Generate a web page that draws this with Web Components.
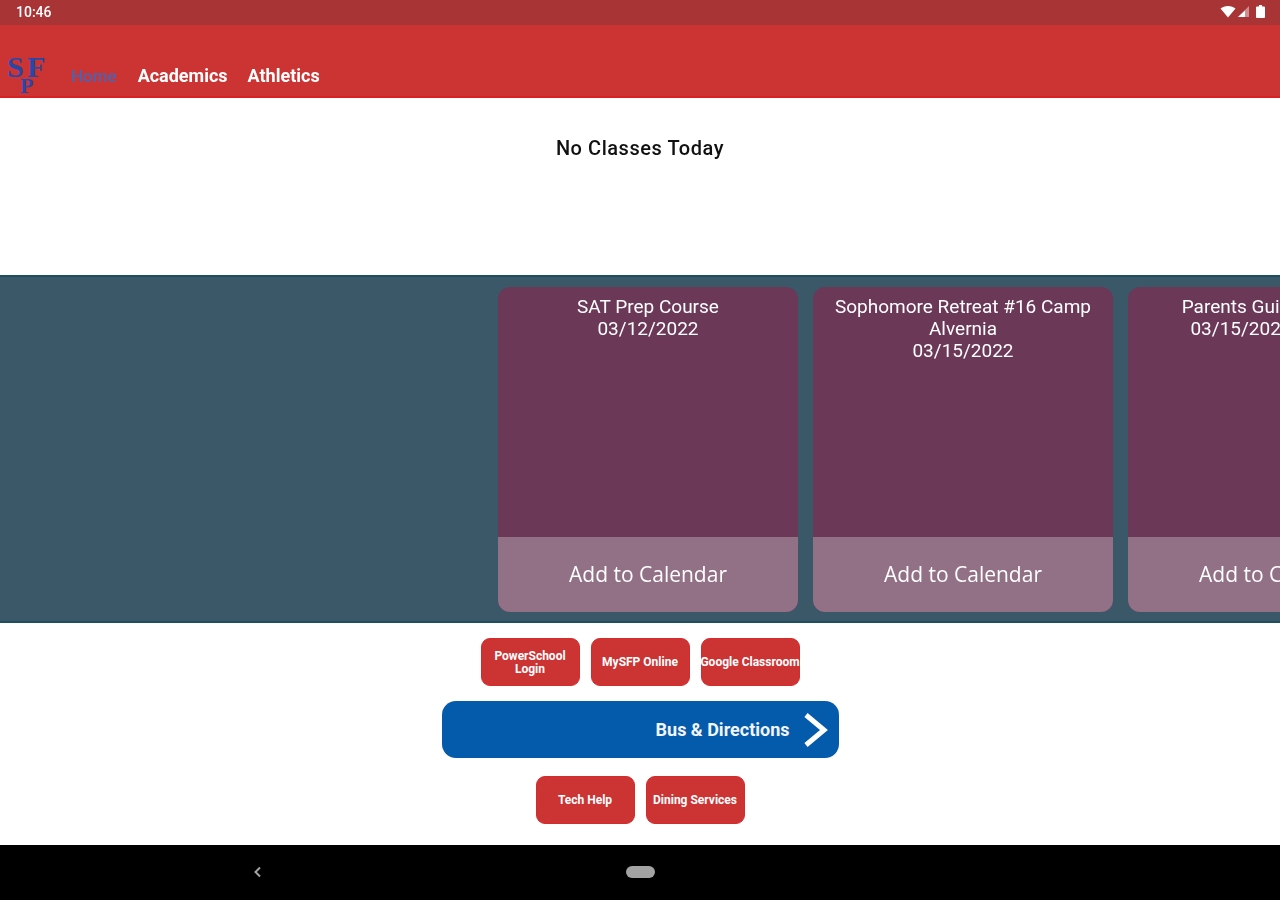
<!DOCTYPE html>
<html>
<head>
<meta charset="utf-8">
<title>SFP</title>
<style>
  html, body { margin: 0; padding: 0; background: #fff; }
  body { font-family: Roboto, "Liberation Sans", sans-serif; width: 1280px; height: 900px; overflow: hidden; }
  app-shell { height: 900px; }
</style>
</head>
<body>
<app-shell>
  <status-bar time="10:46"></status-bar>
  <top-nav>
    <nav-link active>Home</nav-link>
    <nav-link>Academics</nav-link>
    <nav-link>Athletics</nav-link>
  </top-nav>
  <class-notice>No Classes Today</class-notice>
  <event-strip>
    <event-card date="03/12/2022">SAT Prep Course</event-card>
    <event-card date="03/15/2022">Sophomore Retreat #16 Camp Alvernia</event-card>
    <event-card date="03/15/2022" offset>Parents Guide</event-card>
  </event-strip>
  <link-panel>
    <link-row>
      <red-button>PowerSchool Login</red-button>
      <red-button>MySFP Online</red-button>
      <red-button nowrap>Google Classroom</red-button>
    </link-row>
    <bus-button>Bus &amp; Directions</bus-button>
    <link-row>
      <red-button>Tech Help</red-button>
      <red-button>Dining Services</red-button>
    </link-row>
  </link-panel>
  <system-nav></system-nav>
</app-shell>

<script>
class AppShell extends HTMLElement {
  connectedCallback() {
    this.attachShadow({ mode: "open" });
    this.shadowRoot.innerHTML = `
      <style>
        :host { display: flex; flex-direction: column; width: 1280px; filter: blur(0.5px); }
      </style>
      <slot></slot>
    `;
  }
}

class StatusBar extends HTMLElement {
  connectedCallback() {
    this.attachShadow({ mode: "open" });
    this.shadowRoot.innerHTML = `
      <style>
        :host {
          display: flex;
          flex: none;
          height: 25px;
          align-items: center;
          justify-content: space-between;
          padding: 0 15px 0 16px;
          background: #a83436;
          color: #fff;
          font-size: 14px;
          font-weight: 500;
        }
        .time { position: relative; top: -1px; }
        .icons { display: flex; align-items: center; gap: 1px; position: relative; top: -1px; }
        svg { display: block; }
      </style>
      <span class="time">${this.getAttribute("time")}</span>
      <span class="icons">
        <svg width="16" height="12" viewBox="0 0 15 12"><path d="M0 2.6C2 .9 4.600 0 7.500 0s5.500.9 7.500 2.600L7.500 11.500z" fill="#fff"/></svg>
        <svg width="13" height="11" viewBox="0 0 11 11"><path d="M11 0v11H0z" fill="#fff" opacity=".45"/><path d="M7 4.500V11H0z" fill="#fff"/></svg>
        <svg width="9" height="13" viewBox="0 0 9 13" style="margin-left:5px"><path d="M3 0h3v1.500h2a1 1 0 0 1 1 1V12a1 1 0 0 1-1 1H1a1 1 0 0 1-1-1V2.500a1 1 0 0 1 1-1h2z" fill="#fff"/></svg>
      </span>
    `;
  }
}

class TopNav extends HTMLElement {
  connectedCallback() {
    this.attachShadow({ mode: "open" });
    this.shadowRoot.innerHTML = `
      <style>
        :host {
          display: flex;
          flex: none;
          box-sizing: border-box;
          height: 73px;
          align-items: flex-end;
          padding: 0 0 9px 7px;
          background: #cc3333;
          border-bottom: 2px solid #dd1f1f;
        }
        svg { display: block; margin-bottom: -6px; overflow: visible; }
        .links { display: flex; gap: 20px; margin-left: 24px; padding-bottom: 1px; }
      </style>
      <svg width="40" height="38" viewBox="0 0 40 38">
        <g fill="#2748a8" font-family="Liberation Serif, serif" font-weight="700">
          <text x="0" y="22" font-size="30">S</text>
          <text x="20" y="22" font-size="30">F</text>
          <text x="13" y="38" font-size="22">P</text>
        </g>
      </svg>
      <div class="links"><slot></slot></div>
    `;
  }
}

class NavLink extends HTMLElement {
  connectedCallback() {
    this.attachShadow({ mode: "open" });
    this.shadowRoot.innerHTML = `
      <style>
        :host {
          display: block;
          color: #fff;
          font-size: 18px;
          font-weight: 700;
          line-height: 20px;
        }
        :host([active]) { color: #4c63b0; font-size: 17px; font-weight: 500; margin-right: 1px; }
      </style>
      <slot></slot>
    `;
  }
}

class ClassNotice extends HTMLElement {
  connectedCallback() {
    this.attachShadow({ mode: "open" });
    this.shadowRoot.innerHTML = `
      <style>
        :host {
          display: block;
          flex: none;
          height: 177px;
          box-sizing: border-box;
          padding-top: 39px;
          text-align: center;
          color: #111;
          font-size: 20px;
          font-weight: 500;
          letter-spacing: 0.55px;
          line-height: 22px;
        }
      </style>
      <slot></slot>
    `;
  }
}

class EventStrip extends HTMLElement {
  connectedCallback() {
    this.attachShadow({ mode: "open" });
    this.shadowRoot.innerHTML = `
      <style>
        :host {
          display: flex;
          flex: none;
          box-sizing: border-box;
          height: 348px;
          gap: 15px;
          padding: 10px 0 9px 498px;
          overflow: hidden;
          background: #3b5868;
          border-top: 2px solid #1f4e5f;
          border-bottom: 2px solid #1f4e5f;
        }
      </style>
      <slot></slot>
    `;
  }
}

class EventCard extends HTMLElement {
  connectedCallback() {
    this.attachShadow({ mode: "open" });
    this.shadowRoot.innerHTML = `
      <style>
        :host {
          display: flex;
          flex: none;
          flex-direction: column;
          width: 300px;
          border-radius: 12px;
          overflow: hidden;
          background: #6b3858;
          color: #fff;
        }
        .info {
          flex: 1;
          padding: 9px 12px 0;
          text-align: center;
          font-size: 19px;
          line-height: 22px;
        }
        :host([offset]) .info { padding: 9px 74px 0 0; }
        .add {
          flex: none;
          box-sizing: border-box;
          height: 75px;
          padding-bottom: 1px;
          display: flex;
          align-items: center;
          justify-content: center;
          background: #927085;
          font-family: "Open Sans", Roboto, sans-serif;
          font-size: 21px;
        }
      </style>
      <div class="info"><slot></slot><br>${this.getAttribute("date")}</div>
      <div class="add">Add to Calendar</div>
    `;
  }
}

class LinkPanel extends HTMLElement {
  connectedCallback() {
    this.attachShadow({ mode: "open" });
    this.shadowRoot.innerHTML = `
      <style>
        :host {
          display: flex;
          flex: none;
          box-sizing: border-box;
          height: 222px;
          flex-direction: column;
          align-items: center;
          padding-top: 15px;
          gap: 15px;
          background: #fff;
        }
      </style>
      <slot></slot>
    `;
  }
}

class LinkRow extends HTMLElement {
  connectedCallback() {
    this.attachShadow({ mode: "open" });
    this.shadowRoot.innerHTML = `
      <style>
        :host { display: flex; gap: 11px; }
      </style>
      <slot></slot>
    `;
  }
}

class RedButton extends HTMLElement {
  connectedCallback() {
    this.attachShadow({ mode: "open" });
    this.shadowRoot.innerHTML = `
      <style>
        :host {
          display: flex;
          box-sizing: border-box;
          width: 99px;
          height: 48px;
          padding: 1px 5px 0;
          align-items: center;
          justify-content: center;
          border: 1px solid #d92a2a;
          border-radius: 9px;
          background: #cc3333;
          color: #fff;
          font-size: 12px;
          font-weight: 700;
          line-height: 13px;
          text-align: center;
        }
        :host([nowrap]) { white-space: nowrap; }
      </style>
      <slot></slot>
    `;
  }
}

class BusButton extends HTMLElement {
  connectedCallback() {
    this.attachShadow({ mode: "open" });
    this.shadowRoot.innerHTML = `
      <style>
        :host {
          display: flex;
          box-sizing: border-box;
          width: 397px;
          height: 57px;
          margin-bottom: 3px;
          align-items: center;
          justify-content: flex-end;
          gap: 13px;
          padding-right: 11px;
          border-radius: 14px;
          background: #045aab;
          color: #f2f5fa;
          font-size: 18px;
          font-weight: 700;
        }
        svg { display: block; }
      </style>
      <slot></slot>
      <svg width="25" height="34" viewBox="0 0 25 34"><path d="M3 2 L21 17 L3 32" fill="none" stroke="#fff" stroke-width="5"/></svg>
    `;
  }
}

class SystemNav extends HTMLElement {
  connectedCallback() {
    this.attachShadow({ mode: "open" });
    this.shadowRoot.innerHTML = `
      <style>
        :host {
          display: block;
          position: relative;
          flex: none;
          height: 55px;
          background: #000;
        }
        svg { position: absolute; left: 253px; top: 21px; display: block; }
        .pill {
          position: absolute;
          left: 626px;
          top: 21px;
          width: 29px;
          height: 12px;
          border-radius: 6px;
          background: #a3a3a3;
        }
      </style>
      <svg width="9" height="12" viewBox="0 0 9 12"><path d="M7 1.500 L2.500 6 L7 10.500" fill="none" stroke="#a3a3a3" stroke-width="2"/></svg>
      <div class="pill"></div>
    `;
  }
}

customElements.define("app-shell", AppShell);
customElements.define("status-bar", StatusBar);
customElements.define("top-nav", TopNav);
customElements.define("nav-link", NavLink);
customElements.define("class-notice", ClassNotice);
customElements.define("event-strip", EventStrip);
customElements.define("event-card", EventCard);
customElements.define("link-panel", LinkPanel);
customElements.define("link-row", LinkRow);
customElements.define("red-button", RedButton);
customElements.define("bus-button", BusButton);
customElements.define("system-nav", SystemNav);
</script>
</body>
</html>
